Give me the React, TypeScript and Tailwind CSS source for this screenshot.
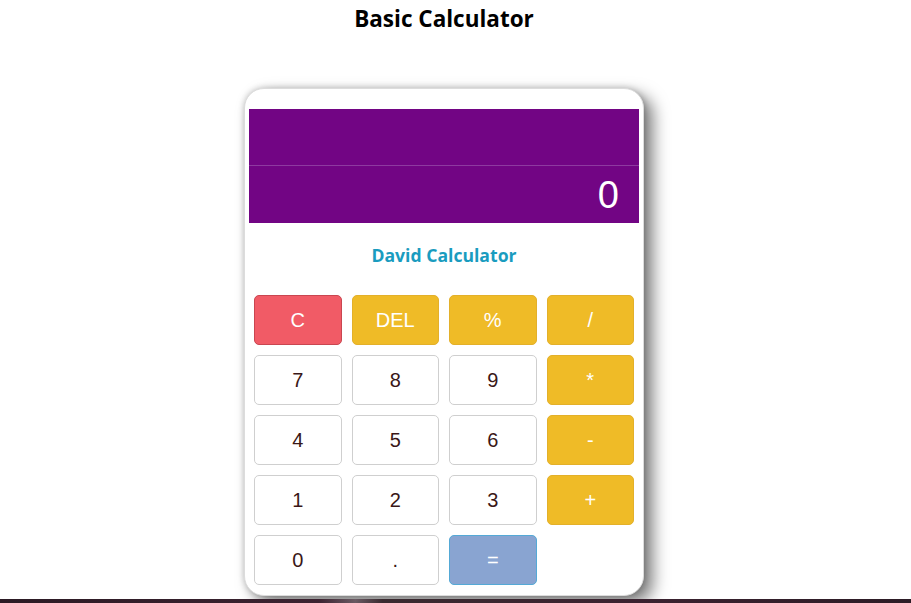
import React from "react";

type Btn = { label: string; kind: "num" | "op" | "clear" | "eq" };

const rows: Btn[][] = [
  [
    { label: "C", kind: "clear" },
    { label: "DEL", kind: "op" },
    { label: "%", kind: "op" },
    { label: "/", kind: "op" },
  ],
  [
    { label: "7", kind: "num" },
    { label: "8", kind: "num" },
    { label: "9", kind: "num" },
    { label: "*", kind: "op" },
  ],
  [
    { label: "4", kind: "num" },
    { label: "5", kind: "num" },
    { label: "6", kind: "num" },
    { label: "-", kind: "op" },
  ],
  [
    { label: "1", kind: "num" },
    { label: "2", kind: "num" },
    { label: "3", kind: "num" },
    { label: "+", kind: "op" },
  ],
  [
    { label: "0", kind: "num" },
    { label: ".", kind: "num" },
    { label: "=", kind: "eq" },
  ],
];

function cls(kind: Btn["kind"]) {
  switch (kind) {
    case "clear":
      return "bg-[#f15b66] border-[#c94650] text-white";
    case "op":
      return "bg-[#efbb27] border-[#e3b02a] text-white";
    case "eq":
      return "bg-[#89a4d1] border-[#54a9d6] text-white";
    default:
      return "bg-white border-[#cfcfcf] text-[#3a1717]";
  }
}

export default function App() {
  return (
    <div className="min-h-screen flex flex-col bg-white" style={{ fontFamily: '"Liberation Sans", Arial, sans-serif' }}>
      <div className="w-[888px] flex flex-col items-center">
        <h1
          className="mt-[5px] text-[22.5px] leading-[28px] font-bold text-black"
          style={{ fontFamily: '"Open Sans", "Noto Sans", sans-serif' }}
        >
          Basic Calculator
        </h1>
        <div className="mt-[55px] w-[400px] h-[508px] bg-white rounded-[20px] border border-[#dcdcdc] shadow-[0_0_6px_rgba(0,0,0,0.22),9px_7px_16px_rgba(0,0,0,0.5)] px-[4px] pt-[20px]">
          <div className="bg-[#720584] h-[114px] flex flex-col">
            <div className="h-[57px] border-b border-[#8e3aa0]" />
            <div className="flex-1 flex items-center justify-end pr-[20px] text-white text-[38px] leading-none">
              0
            </div>
          </div>
          <div
            className="mt-[21px] text-center text-[17.6px] leading-[22px] font-bold text-[#1a9cbf]"
            style={{ fontFamily: '"Open Sans", "Noto Sans", sans-serif' }}
          >
            David Calculator
          </div>
          <div className="mt-[29px] px-[5px] grid grid-cols-4 gap-x-[10px] gap-y-[10px]">
            {rows.flat().map((b, i) => (
              <button
                key={i}
                className={`h-[50px] rounded-[5px] border text-[20px] flex items-center justify-center pb-[1px] ${cls(b.kind)}`}
              >
                {b.label}
              </button>
            ))}
          </div>
        </div>
      </div>
      <div className="mt-auto h-[4px] w-full bg-[linear-gradient(90deg,#2b1a24_0%,#3c2331_35%,#6a5a63_39%,#3a2a30_42%,#3b2230_70%,#2c1c26_100%)]" />
    </div>
  );
}
